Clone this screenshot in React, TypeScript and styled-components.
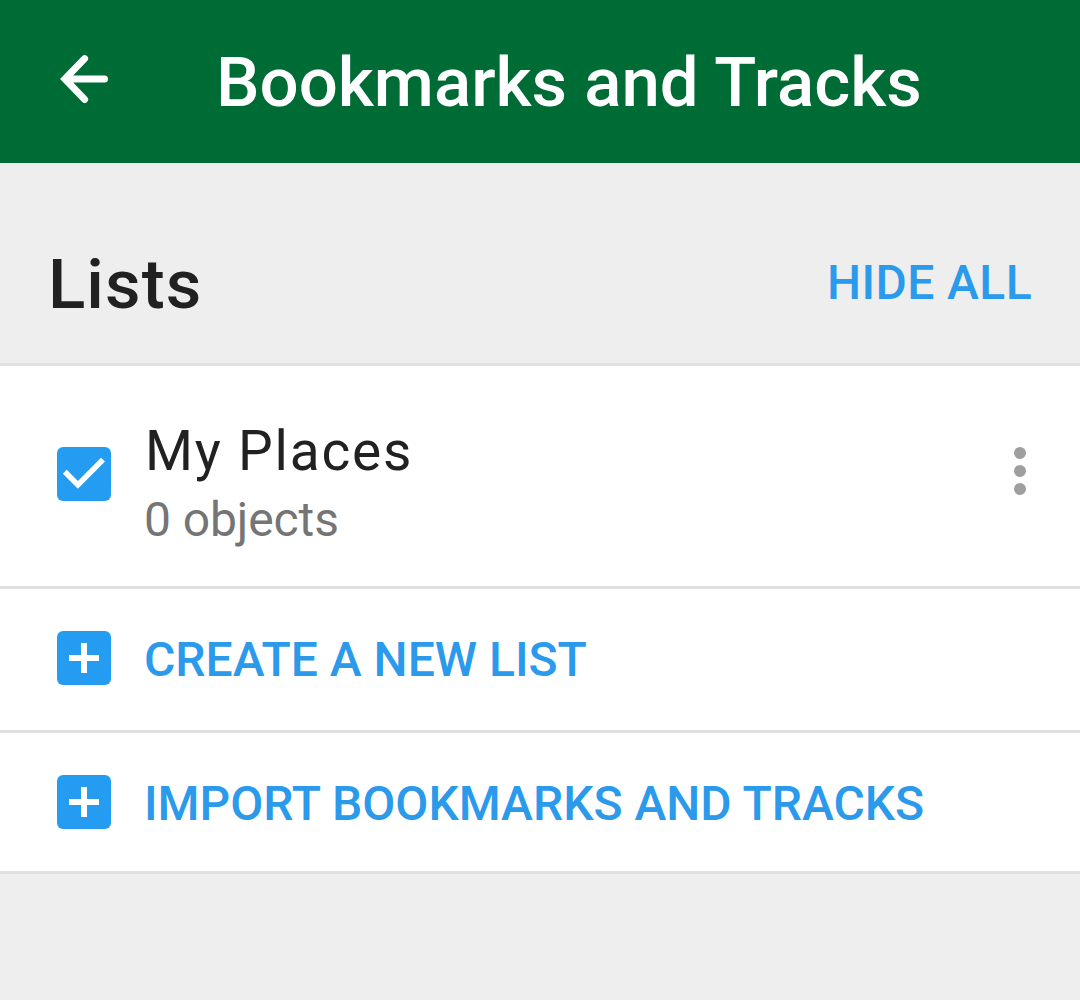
import React from "react";
import styled, { createGlobalStyle } from "styled-components";

const Global = createGlobalStyle`
  * { box-sizing: border-box; }
  body { margin: 0; background: #eeeeee; font-family: Roboto, sans-serif; }
`;
const Page = styled.div`
  display: flex;
  flex-direction: column;
  width: 1080px;
  height: 1000px;
  overflow: hidden;
  background: #eeeeee;
`;
const Toolbar = styled.header`
  display: flex;
  height: 163px;
  padding-left: 60px;
  background: #006c35;
  color: #fff;
`;
const BackButton = styled.button`
  width: 48px;
  height: 48px;
  margin-top: 55px;
  padding: 0;
  border: 0;
  background: none;
  svg { display: block; overflow: visible; }
`;
const Title = styled.h1`
  margin: 43px 0 0 108px;
  font-size: 69px;
  line-height: 80px;
  font-weight: 500;
  white-space: nowrap;
`;
const SectionHeader = styled.div`
  display: flex;
  justify-content: space-between;
  height: 203px;
  padding: 0 48px;
  border-bottom: 3px solid #e0e0e0;
`;
const SectionTitle = styled.h2`
  margin: 82px 0 0;
  font-size: 69px;
  line-height: 80px;
  font-weight: 500;
  letter-spacing: 1.1px;
  color: #212121;
`;
const HideAll = styled.button`
  height: 60px;
  margin: 90px 0 0;
  padding: 0;
  border: 0;
  background: none;
  font: 500 48px/60px Roboto, sans-serif;
  letter-spacing: 0.4px;
  color: #2b9aeb;
`;
const Row = styled.div<{ $height: number }>`
  display: flex;
  height: ${(p) => p.$height}px;
  padding: 0 48px 0 57px;
  background: #fff;
  border-bottom: 3px solid #e0e0e0;
`;
const IconBox = styled.div<{ $top: number }>`
  flex: none;
  width: 54px;
  height: 54px;
  margin: ${(p) => p.$top}px 33px 0 0;
  border-radius: 6px;
  background: #249cf2;
  svg { display: block; }
`;
const Texts = styled.div`
  flex: 1;
  padding-top: 50px;
`;
const Name = styled.div`
  padding-left: 1px;
  font-size: 55px;
  line-height: 70px;
  letter-spacing: 1.8px;
  color: #212121;
`;
const Count = styled.div`
  font-size: 48px;
  line-height: 68px;
  letter-spacing: -0.1px;
  color: #757575;
`;
const More = styled.button`
  display: flex;
  flex-direction: column;
  gap: 6px;
  margin: 81px 6px 0 0;
  padding: 0;
  border: 0;
  background: none;
`;
const Dot = styled.span`
  width: 12px;
  height: 12px;
  border-radius: 50%;
  background: #9e9e9e;
`;
const Action = styled.div`
  margin-top: 41px;
  font-size: 48px;
  line-height: 60px;
  font-weight: 500;
  white-space: nowrap;
  color: #2b9aeb;
`;

const Plus = () => (
  <svg width="54" height="54" viewBox="0 0 54 54">
    <path d="M12 27H42M27 12V42" stroke="#fff" strokeWidth="6" />
  </svg>
);

export default function App() {
  return (
    <Page>
      <Global />
      <Toolbar>
        <BackButton aria-label="Back">
          <svg width="48" height="48" viewBox="0 0 48 48" fill="none" stroke="#fff" strokeWidth="7" strokeLinecap="round">
            <path d="M44.5 24H8M24.6 3.6L4.9 24L24.6 44.4" />
          </svg>
        </BackButton>
        <Title>Bookmarks and Tracks</Title>
      </Toolbar>
      <SectionHeader>
        <SectionTitle>Lists</SectionTitle>
        <HideAll>HIDE ALL</HideAll>
      </SectionHeader>
      <Row $height={223}>
        <IconBox $top={81}>
          <svg width="54" height="54" viewBox="0 0 54 54" fill="none">
            <path d="M7.8 24.8L20.9 37.9L46 12.6" stroke="#fff" strokeWidth="5.6" />
          </svg>
        </IconBox>
        <Texts>
          <Name>My Places</Name>
          <Count>0 objects</Count>
        </Texts>
        <More aria-label="More"><Dot /><Dot /><Dot /></More>
      </Row>
      <Row $height={144}>
        <IconBox $top={42}><Plus /></IconBox>
        <Action>CREATE A NEW LIST</Action>
      </Row>
      <Row $height={141}>
        <IconBox $top={42}><Plus /></IconBox>
        <Action>IMPORT BOOKMARKS AND TRACKS</Action>
      </Row>
    </Page>
  );
}
